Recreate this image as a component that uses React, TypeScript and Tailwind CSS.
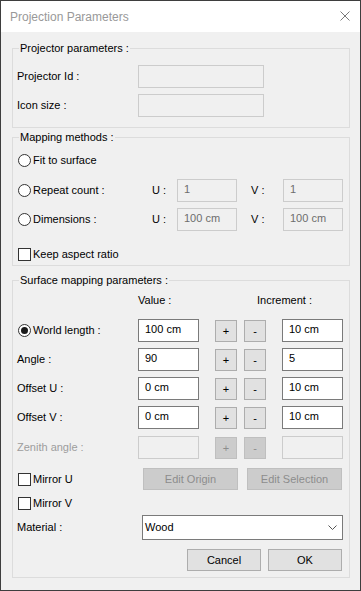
import React from 'react'

const font = { fontFamily: '"Liberation Sans", Arial, sans-serif' }

const Radio = ({ checked = false }: { checked?: boolean }) => (
    <span className="flex h-[13px] w-[13px] shrink-0 items-center justify-center rounded-full border border-[#333333] bg-white">
        {checked && <span className="h-[7px] w-[7px] rounded-full bg-[#1a1a1a]" />}
    </span>
)

const Check = () => (
    <span className="h-[13px] w-[13px] shrink-0 border border-[#333333] bg-white" />
)

const Field = ({ value = '', w, disabled = false }: { value?: string; w: string; disabled?: boolean }) => (
    <div
        className={`flex h-[23px] ${w} shrink-0 items-center pl-[6px] pb-[2px] ${disabled ? 'border border-[#cccccc] bg-[#f0f0f0] text-[#6d6d6d]' : 'border border-[#7a7a7a] bg-white text-black'}`}
    >
        {value}
    </div>
)

const Btn = ({ label, w, disabled = false, className = '' }: { label: string; w: string; disabled?: boolean; className?: string }) => (
    <button
        className={`flex h-[22px] ${w} shrink-0 items-center justify-center ${disabled ? 'border border-[#bfbfbf] bg-[#cccccc] text-[#8c8c8c]' : 'border border-[#adadad] bg-[#e1e1e1] text-black'} ${className}`}
    >
        {label}
    </button>
)

const Group = ({ title, className = '', children }: { title: string; className?: string; children: React.ReactNode }) => (
    <fieldset className={`w-[338px] border border-[#dcdcdc] px-[4px] ${className}`}>
        <legend className="ml-[2px] px-[1px] leading-[14px]">{title}</legend>
        {children}
    </fieldset>
)

const ValueRow = ({ label, value, inc, radio = false, disabled = false, mt }: { label: string; value: string; inc: string; radio?: boolean; disabled?: boolean; mt: string }) => (
    <div className={`flex h-[23px] items-center ${mt}`}>
        <div className={`flex w-[121px] items-center ${disabled ? 'text-[#9d9d9d]' : ''}`}>
            {radio && <span className="ml-[1px] mr-[2px]"><Radio checked /></span>}
            {label}
        </div>
        <Field value={value} w="w-[61px]" disabled={disabled} />
        <Btn label="+" w="w-[22px]" disabled={disabled} className="ml-[16px] mt-[1px]" />
        <Btn label="-" w="w-[22px]" disabled={disabled} className="ml-[7px] mt-[1px]" />
        <div className="ml-[16px]">
            <Field value={inc} w="w-[61px]" disabled={disabled} />
        </div>
    </div>
)

export default function App() {
    return (
        <div className="h-[591px] w-[361px] overflow-hidden border border-[#3e3e3e] bg-[#f0f0f0] text-[11px] text-black" style={font}>
            {/* title bar */}
            <div className="flex h-[31px] items-center justify-between bg-white pl-[9px] pr-[10px]">
                <span className="text-[12px] text-[#999999]">Projection Parameters</span>
                <svg width="10" height="10" viewBox="0 0 10 10" className="mb-[1px]">
                    <path d="M0.5 0.5 L9.5 9.5 M9.5 0.5 L0.5 9.5" stroke="#7a7a7a" strokeWidth="1" />
                </svg>
            </div>

            <div className="flex flex-col px-[11px]">
                <Group title="Projector parameters :" className="mt-[9px] pb-[10px]">
                    <div className="flex h-[23px] items-center pt-[10px] box-content">
                        <span className="w-[121px]">Projector Id :</span>
                        <Field w="w-[126px]" disabled />
                    </div>
                    <div className="mt-[6px] flex h-[23px] items-center">
                        <span className="w-[121px]">Icon size :</span>
                        <Field w="w-[126px]" disabled />
                    </div>
                </Group>

                <Group title="Mapping methods :" className="mt-[2px] pb-[4px]">
                    <div className="mt-[5px] flex h-[23px] items-center gap-[2px] pl-[1px]">
                        <Radio />
                        <span>Fit to surface</span>
                    </div>
                    <div className="mt-[7px] flex h-[23px] items-center">
                        <div className="flex w-[135px] items-center gap-[2px] pl-[1px]">
                            <Radio />
                            <span>Repeat count :</span>
                        </div>
                        <span className="w-[25px]">U :</span>
                        <Field value="1" w="w-[60px]" disabled />
                        <span className="ml-[14px] w-[32px]">V :</span>
                        <Field value="1" w="w-[60px]" disabled />
                    </div>
                    <div className="mt-[6px] flex h-[23px] items-center">
                        <div className="flex w-[135px] items-center gap-[2px] pl-[1px]">
                            <Radio />
                            <span>Dimensions :</span>
                        </div>
                        <span className="w-[25px]">U :</span>
                        <Field value="100 cm" w="w-[60px]" disabled />
                        <span className="ml-[14px] w-[32px]">V :</span>
                        <Field value="100 cm" w="w-[60px]" disabled />
                    </div>
                    <div className="mt-[16px] flex h-[14px] items-center gap-[2px] pl-[1px]">
                        <Check />
                        <span>Keep aspect ratio</span>
                    </div>
                </Group>

                <Group title="Surface mapping parameters :" className="mt-[7px] pb-[6px]">
                    <div className="mt-[6px] flex h-[14px] items-center">
                        <span className="ml-[121px] w-[119px]">Value :</span>
                        <span>Increment :</span>
                    </div>
                    <ValueRow label="World length :" value="100 cm" inc="10 cm" radio mt="mt-[12px]" />
                    <ValueRow label="Angle :" value="90" inc="5" mt="mt-[6px]" />
                    <ValueRow label="Offset U :" value="0 cm" inc="10 cm" mt="mt-[6px]" />
                    <ValueRow label="Offset V :" value="0 cm" inc="10 cm" mt="mt-[6px]" />
                    <ValueRow label="Zenith angle :" value="" inc="" disabled mt="mt-[7px]" />

                    <div className="mt-[9px] flex h-[22px] items-center">
                        <div className="flex w-[126px] items-center gap-[2px] pl-[1px]">
                            <Check />
                            <span>Mirror U</span>
                        </div>
                        <Btn label="Edit Origin" w="w-[95px]" disabled />
                        <Btn label="Edit Selection" w="w-[95px]" disabled className="ml-[9px]" />
                    </div>
                    <div className="mt-[6px] flex h-[14px] items-center gap-[2px] pl-[1px]">
                        <Check />
                        <span>Mirror V</span>
                    </div>
                    <div className="mt-[5px] flex h-[25px] items-center">
                        <span className="w-[125px]">Material :</span>
                        <div className="flex h-[25px] w-[201px] items-center justify-between border border-[#7a7a7a] bg-white pl-[2px] pr-[5px]">
                            <span>Wood</span>
                            <svg width="9" height="5" viewBox="0 0 9 5">
                                <path d="M0.5 0.5 L4.5 4.5 L8.5 0.5" fill="none" stroke="#555555" strokeWidth="1" />
                            </svg>
                        </div>
                    </div>
                    <div className="mt-[9px] flex">
                        <Btn label="Cancel" w="w-[74px]" className="ml-[170px]" />
                        <Btn label="OK" w="w-[74px]" className="ml-[7px]" />
                    </div>
                </Group>
            </div>
        </div>
    )
}
